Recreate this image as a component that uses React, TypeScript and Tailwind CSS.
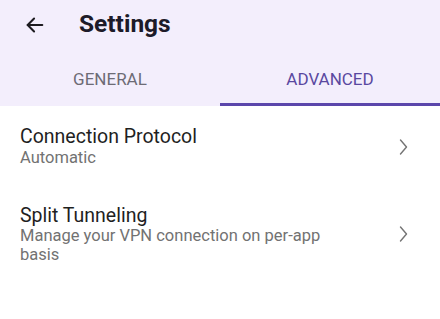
import React from "react";

function Chevron() {
  return (
    <svg width="12" height="18" viewBox="0 0 12 18" fill="none" stroke="#747474" strokeWidth="1.4" strokeLinecap="round" strokeLinejoin="round">
      <path d="M3.5 2 L9.5 9 L3.5 16" />
    </svg>
  );
}

export default function App() {
  return (
    <div className="w-[440px] h-[319px] bg-white overflow-hidden" style={{ fontFamily: "Roboto, 'Liberation Sans', sans-serif" }}>
      <div className="bg-[#f3eefc]">
        <div className="h-[49px] flex items-center">
          <svg className="ml-[24px]" width="22" height="22" viewBox="0 0 24 24" fill="none" stroke="#1d1b20" strokeWidth="2.2" strokeLinecap="round" strokeLinejoin="round">
            <path d="M20 12H4" />
            <path d="M11 5L4 12L11 19" />
          </svg>
          <span className="ml-[33px] text-[24.5px] font-bold text-[#1d1b29]">Settings</span>
        </div>
        <div className="flex h-[57px]">
          <div className="flex-1 flex flex-col">
            <div className="flex-1 flex items-center justify-center pt-[8px] text-[17px] text-[#6d6b75]">GENERAL</div>
            <div className="h-[3px]" />
          </div>
          <div className="flex-1 flex flex-col">
            <div className="flex-1 flex items-center justify-center pt-[8px] text-[17px] text-[#5a48a0]">ADVANCED</div>
            <div className="h-[3px] bg-[#5b46ab]" />
          </div>
        </div>
      </div>
      <div className="flex items-center pl-[20px] pr-[31px] pt-[19px]">
        <div className="flex-1">
          <div className="text-[19.5px] leading-[23px] text-[#1f1f1f]">Connection Protocol</div>
          <div className="text-[16.5px] leading-[20px] text-[#727272]">Automatic</div>
        </div>
        <Chevron />
      </div>
      <div className="flex items-center pl-[20px] pr-[31px] pt-[36px]">
        <div className="flex-1 pr-[60px]">
          <div className="text-[19.5px] leading-[23px] text-[#1f1f1f]">Split Tunneling</div>
          <div className="text-[16.5px] leading-[18.5px] text-[#727272]">Manage your VPN connection on per-app basis</div>
        </div>
        <Chevron />
      </div>
    </div>
  );
}
